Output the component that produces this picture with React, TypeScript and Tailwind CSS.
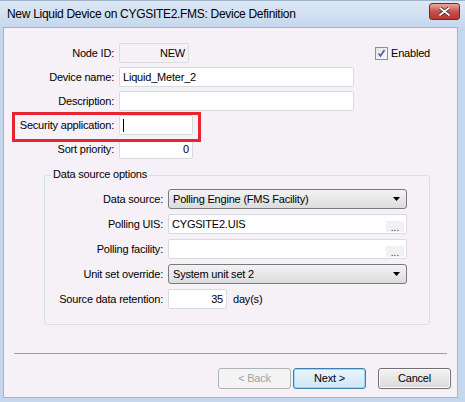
import React from 'react'

const font = { fontFamily: '"Liberation Sans", Arial, sans-serif' }

function Label({ w, children }: { w: string; children: React.ReactNode }) {
  return <div className={`${w} shrink-0 text-right pr-[5px] leading-none`}>{children}</div>
}

function TextBox({ w, value, right, readOnly, caret }: { w: string; value?: string; right?: boolean; readOnly?: boolean; caret?: boolean }) {
  return (
    <div
      className={`${w} h-[20px] flex items-center px-[3px] border rounded-[2px] ${
        readOnly ? 'bg-[#f6f1f6] border-[#dcdcdc]' : 'bg-white border-[#d4dbe3]'
      } ${right ? 'justify-end' : ''}`}
    >
      {caret && <span className="w-px h-[13px] bg-black" />}
      {value && <span className="leading-none">{value}</span>}
    </div>
  )
}

function Combo({ value }: { value: string }) {
  return (
    <div className="w-[239px] h-[20px] flex items-center justify-between pl-[4px] pr-[6px] border border-[#7a7a7a] rounded-[3px] bg-gradient-to-b from-[#f3f3f3] to-[#dcdcdc]">
      <span className="leading-none">{value}</span>
      <svg width="7" height="4" viewBox="0 0 7 4">
        <path d="M0 0h7L3.5 4z" fill="#000" />
      </svg>
    </div>
  )
}

function BrowseBox({ value }: { value?: string }) {
  return (
    <div className="w-[239px] h-[20px] flex items-center justify-between pl-[3px] pr-[2px] border border-[#d4dbe3] rounded-[2px] bg-white">
      <span className="leading-none">{value}</span>
      <div className="w-[18px] h-[11px] mt-[5px] bg-[#f1f1f1] flex items-end justify-center text-[10px] leading-[9px] text-[#333] tracking-normal">...</div>
    </div>
  )
}

function Button({ children, disabled, primary }: { children: React.ReactNode; disabled?: boolean; primary?: boolean }) {
  return (
    <div
      className={`w-[73px] h-[21px] flex items-center justify-center rounded-[3px] border leading-none ${
        disabled
          ? 'border-[#adb2b5] bg-[#f4f4f4] text-[#a0a0a0]'
          : primary
          ? 'border-[#3c7fb1] bg-gradient-to-b from-[#eaf6fd] to-[#d0e6f5] shadow-[inset_0_0_0_1px_#9dd5f5]'
          : 'border-[#707070] bg-gradient-to-b from-[#f2f2f2] to-[#dadada] shadow-[inset_0_0_0_1px_#fcfcfc]'
      }`}
    >
      {children}
    </div>
  )
}

export default function App() {
  return (
    <div className="w-[465px] h-[402px] flex flex-col bg-[#c4d7ed] text-[11px] tracking-[-0.2px] text-black" style={font}>
      {/* Title bar */}
      <div className="h-[27px] shrink-0 flex items-center justify-between pl-[7px] pr-[5px] bg-gradient-to-b from-[#dde8f5] to-[#c6d8ee] border-t border-[#9fb4cc]">
        <span className="text-[12px] tracking-[-0.3px] leading-none">New Liquid Device on CYGSITE2.FMS: Device Definition</span>
        <div className="w-[31px] h-[17px] mb-[5px] rounded-[3px] border border-[#6d2a24] bg-gradient-to-b from-[#e9a99c] via-[#c75050] to-[#b8372c] flex items-center justify-center">
          <svg width="11" height="9" viewBox="0 0 11 9">
            <path d="M1 1l9 7M10 1l-9 7" stroke="#3a1410" strokeWidth="3.2" strokeLinecap="round" />
            <path d="M1 1l9 7M10 1l-9 7" stroke="#fff" strokeWidth="1.8" strokeLinecap="round" />
          </svg>
        </div>
      </div>

      {/* Body */}
      <div className="flex-1 flex ml-[3px] mr-[7px] mb-[4px]">
        <div className="relative flex-1 bg-[#f6f1f6] border border-[#a3b4c6] flex flex-col pt-[15px]">
          {/* Top fields */}
          <div className="flex flex-col gap-[4px]">
            <div className="flex items-center">
              <Label w="w-[115px]">Node ID:</Label>
              <TextBox w="w-[70px]" value="NEW" right readOnly />
              <div className="ml-[186px] flex items-center gap-[3px]">
                <div className="w-[13px] h-[13px] border border-[#8e8f8f] bg-gradient-to-br from-[#e4e4e4] to-[#fafafa] flex items-center justify-center">
                  <svg width="9" height="9" viewBox="0 0 9 9">
                    <path d="M1.5 4.5l2 2.5 4-6" stroke="#4a5f97" strokeWidth="1.6" fill="none" />
                  </svg>
                </div>
                <span className="leading-none">Enabled</span>
              </div>
            </div>
            <div className="flex items-center">
              <Label w="w-[115px]">Device name:</Label>
              <TextBox w="w-[235px]" value="Liquid_Meter_2" />
            </div>
            <div className="flex items-center">
              <Label w="w-[115px]">Description:</Label>
              <TextBox w="w-[235px]" />
            </div>
            <div className="flex items-center">
              <Label w="w-[115px]">Security application:</Label>
              <TextBox w="w-[74px]" caret />
            </div>
            <div className="flex items-center">
              <Label w="w-[115px]">Sort priority:</Label>
              <TextBox w="w-[74px]" value="0" right />
            </div>
          </div>

          {/* Highlight annotation */}
          <div className="absolute left-[8px] top-[84px] w-[189px] h-[30px] border-[3px] border-[#e52530]" />

          {/* Group box */}
          <div className="relative mt-[16px] ml-[40px] w-[386px] h-[150px] border border-[#d5dfe5] rounded-[3px] pt-[13px]">
            <span className="absolute -top-[7px] left-[6px] px-[2px] bg-[#f6f1f6] leading-none">Data source options</span>
            <div className="flex flex-col gap-[5px]">
              <div className="flex items-center">
                <Label w="w-[123px]">Data source:</Label>
                <Combo value="Polling Engine (FMS Facility)" />
              </div>
              <div className="flex items-center">
                <Label w="w-[123px]">Polling UIS:</Label>
                <BrowseBox value="CYGSITE2.UIS" />
              </div>
              <div className="flex items-center">
                <Label w="w-[123px]">Polling facility:</Label>
                <BrowseBox />
              </div>
              <div className="flex items-center">
                <Label w="w-[123px]">Unit set override:</Label>
                <Combo value="System unit set 2" />
              </div>
              <div className="flex items-center">
                <Label w="w-[123px]">Source data retention:</Label>
                <TextBox w="w-[59px]" value="35" right />
                <span className="ml-[6px] leading-none">day(s)</span>
              </div>
            </div>
          </div>

          {/* Separator */}
          <div className="mt-[28px] mx-[10px] h-px bg-[#a0a0a0]" />

          {/* Buttons */}
          <div className="mt-[14px] flex justify-end pr-[6px]">
            <Button disabled>&lt; Back</Button>
            <div className="w-[2px]" />
            <Button primary>Next &gt;</Button>
            <div className="w-[12px]" />
            <Button>Cancel</Button>
          </div>
        </div>
      </div>
    </div>
  )
}
